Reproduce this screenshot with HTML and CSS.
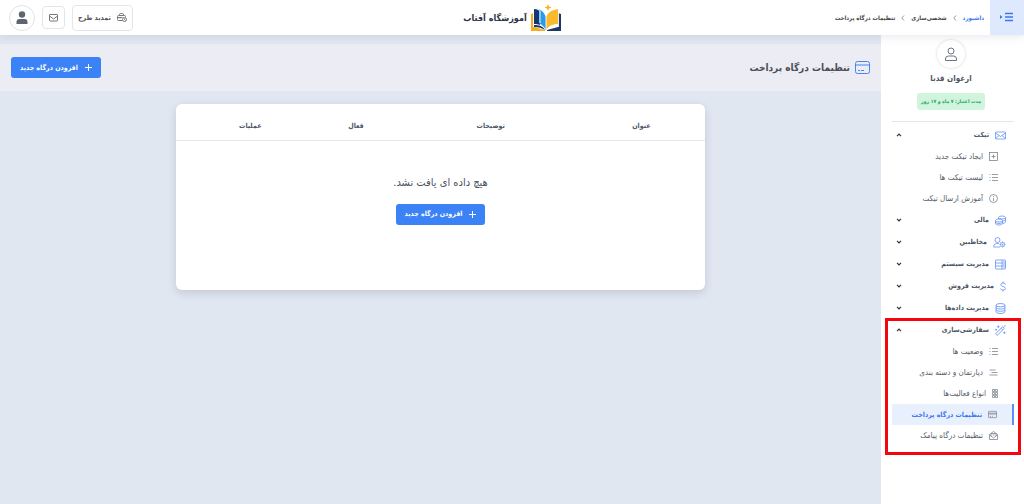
FILE: index.html
```html
<!DOCTYPE html>
<html lang="fa" dir="rtl">
<head>
    <meta charset="UTF-8">
    <meta name="viewport" content="width=device-width, initial-scale=1.0">
    <title>تنظیمات درگاه پرداخت</title>
    <link rel="stylesheet" href="styles.css">
</head>
<body>

<header class="topbar">
    <div class="topbar-start">
        <button class="menu-toggle" aria-label="منو">
            <svg width="16" height="10" viewBox="0 0 16 10" fill="none" stroke="#3b76f0" stroke-width="1.3"><path d="M6 1.500h8M6 5h8M6 8.500h8"/><path d="M1 3l2.500 2L1 7z" fill="#3b76f0" stroke="none"/></svg>
        </button>
        <nav class="breadcrumb">
            <a href="#" class="current">داشبورد</a>
            <svg class="sep" viewBox="0 0 4 6"><path d="M1 .5L3.200 3 1 5.500"/></svg>
            <a href="#">شخصی‌سازی</a>
            <svg class="sep" viewBox="0 0 4 6"><path d="M1 .5L3.200 3 1 5.500"/></svg>
            <span>تنظیمات درگاه پرداخت</span>
        </nav>
    </div>
    <div class="brand">
        <svg width="30" height="28" viewBox="0 0 30 28">
            <path d="M0 10l3-1v14l11 3v1H0z" fill="#f9ab22"/>
            <path d="M30 10l-3-1v14l-11 3v1h14z" fill="#1c3764"/>
            <path d="M3 5c3 0 5 1 6 3v13c-2-1-4-1-6-1z" fill="#15396f"/>
            <path d="M8 5c4 2 6 5 7 9v13c-1-4-4-6-7-8z" fill="#2a9be8"/>
            <path d="M3 21c5 0 9 1 11 5-3-2-6-3-11-3z" fill="#15396f"/>
            <path d="M27 5c-7 1-11 4-12 9v13c2-5 6-7 12-7z" fill="#fbb92c"/>
            <path d="M9 5v14M15 13v14M2.500 8v15M27.500 8v15M15 27c2-4 6-6 12-6" fill="none" stroke="#fff" stroke-width=".9"/>
            <path d="M17 0l1 2.500 2.500 1-2.500 1-1 2.500-1-2.500-2.500-1 2.500-1z" fill="#fbb324"/>
        </svg>
        <span>آموزشگاه آفتاب</span>
    </div>
    <div class="topbar-end">
        <button class="top-btn renew">
            <svg width="10" height="9" viewBox="0 0 20 18" class="line-icon"><path d="M5 5V3q0-2 2-2h4q2 0 2 2v2M11 15H3q-2 0-2-2V7q0-2 2-2h12q2 0 2 2v1M1 9h10M6 8v3"/><circle cx="15" cy="13" r="4"/><path d="M15 11v2l2 1"/></svg>
            تمدید طرح
        </button>
        <button class="top-btn mail" aria-label="پیام‌ها">
            <svg width="9" height="8" viewBox="0 0 18 16" class="line-icon"><rect x="1" y="1" width="16" height="13" rx="1"/><path d="M1 4l8 6 8-6"/></svg>
        </button>
        <button class="user-btn" aria-label="حساب کاربری">
            <svg width="12" height="13" viewBox="0 0 12 13" fill="#5d6472"><circle cx="6" cy="3.500" r="3.200"/><path d="M.5 13v-2q0-3 3-3h5q3 0 3 3v2z"/></svg>
        </button>
    </div>
</header>

<div class="layout">
    <aside class="sidebar">
        <div class="profile">
            <div class="profile-avatar">
                <svg width="14" height="15" viewBox="0 0 14 15" fill="none" stroke="#6b7280" stroke-width="1"><circle cx="7" cy="4" r="3"/><path d="M1.500 13.500v-1.500q0-3 3-3h5q3 0 3 3v1.500z"/></svg>
            </div>
            <div class="profile-name">ارغوان قدبا</div>
            <div class="profile-badge">مدت اعتبار: ۷ ماه و ۱۷ روز</div>
        </div>

        <nav class="menu">
            <section>
                <button class="group" aria-expanded="true">
                    <svg class="icon" viewBox="0 0 22 20"><rect x="1" y="3" width="20" height="14" rx="1"/><path d="M1 5l10 7 10-7M1 16l7-6M21 16l-7-6"/></svg>
                    <span>تیکت</span>
                    <svg class="chevron" viewBox="0 0 6 4"><path d="M1 3.200L3 1.200l2 2"/></svg>
                </button>
                <ul class="submenu">
                    <li><a href="#"><svg class="icon" viewBox="0 0 18 18"><rect x="1" y="1" width="16" height="16"/><path d="M9 5v8M5 9h8"/></svg>ایجاد تیکت جدید</a></li>
                    <li><a href="#"><svg class="icon" viewBox="0 0 18 18"><path d="M6 3h12M6 9h12M6 15h12M1 3h2M1 9h2M1 15h2"/></svg>لیست تیکت ها</a></li>
                    <li><a href="#"><svg class="icon" viewBox="0 0 18 18"><circle cx="9" cy="9" r="8"/><path d="M9 8v6M9 4v2"/></svg>آموزش ارسال تیکت</a></li>
                </ul>
            </section>
            <section>
                <button class="group">
                    <svg class="icon" viewBox="0 0 22 20"><ellipse cx="14" cy="4" rx="7" ry="3"/><path d="M7 4v3M21 4v9q-1 2-5 3M21 8q-1 2-5 3"/><ellipse cx="8" cy="10" rx="7" ry="3"/><path d="M1 10v6c0 4 14 4 14 0v-6M1 13c0 4 14 4 14 0"/></svg>
                    <span>مالی</span>
                    <svg class="chevron" viewBox="0 0 6 4"><path d="M1 .8l2 2 2-2"/></svg>
                </button>
            </section>
            <section>
                <button class="group">
                    <svg class="icon wide" viewBox="0 0 26 22"><circle cx="9" cy="6" r="5"/><path d="M14 20H1q0-7 6-7h5"/><circle cx="19" cy="15" r="4"/><circle cx="19" cy="15" r="1"/><path d="M19 9v2M19 19v2M13 15h2M23 15h2M15 11l1 1M22 18l1 1M23 11l-1 1M15 19l1-1"/></svg>
                    <span>مخاطبین</span>
                    <svg class="chevron" viewBox="0 0 6 4"><path d="M1 .8l2 2 2-2"/></svg>
                </button>
            </section>
            <section>
                <button class="group">
                    <svg class="icon" viewBox="0 0 22 20"><rect x="1" y="1" width="20" height="18" rx="1"/><path d="M1 7h20M1 13h20M14 1v18M17 4h2M17 10h2M17 16h2"/></svg>
                    <span>مدیریت سیستم</span>
                    <svg class="chevron" viewBox="0 0 6 4"><path d="M1 .8l2 2 2-2"/></svg>
                </button>
            </section>
            <section>
                <button class="group">
                    <svg class="icon narrow" viewBox="0 0 12 20"><path d="M6 0v3M6 17v3M11 6q0-3-5-3-4.500 0-4.500 3.300Q1.500 9 6 10q5 1 5 4 0 3-5 3t-5-3"/></svg>
                    <span>مدیریت فروش</span>
                    <svg class="chevron" viewBox="0 0 6 4"><path d="M1 .8l2 2 2-2"/></svg>
                </button>
            </section>
            <section>
                <button class="group">
                    <svg class="icon" viewBox="0 0 20 20"><ellipse cx="10" cy="4" rx="8" ry="3"/><path d="M2 4v12c0 4 16 4 16 0V4M2 8c0 4 16 4 16 0M2 12c0 4 16 4 16 0"/></svg>
                    <span>مدیریت داده‌ها</span>
                    <svg class="chevron" viewBox="0 0 6 4"><path d="M1 .8l2 2 2-2"/></svg>
                </button>
            </section>
            <section class="marked">
                <button class="group" aria-expanded="true">
                    <svg class="icon" viewBox="0 0 20 20"><path d="M1 16L14 3l3 3L4 19zM11 6l3 3M6 1v4M4 3h4M2 7v3M.5 8.500h3M17 12v4M15 14h4M18 0v3"/></svg>
                    <span>سفارشی‌سازی</span>
                    <svg class="chevron" viewBox="0 0 6 4"><path d="M1 3.200L3 1.200l2 2"/></svg>
                </button>
                <ul class="submenu">
                    <li><a href="#"><svg class="icon" viewBox="0 0 18 18"><path d="M6 3h12M6 9h12M6 15h12M1 3h2M1 9h2M1 15h2"/></svg>وضعیت ها</a></li>
                    <li><a href="#"><svg class="icon" viewBox="0 0 18 18"><path d="M1 4h12M5 9h12M1 14h16"/></svg>دپارتمان و دسته بندی</a></li>
                    <li><a href="#"><svg class="icon slim" viewBox="0 0 12 18"><path d="M1 1h4v4H1zM7 1h4v4H7zM1 7h4v4H1zM7 7h4v4H7zM1 13h4v4H1zM7 13h4v4H7z"/></svg>انواع فعالیت‌ها</a></li>
                    <li><a href="#" class="active"><svg class="icon" viewBox="0 0 20 16"><rect x="1" y="1" width="18" height="14" rx="1"/><path d="M1 5h18M1 7h18M4 12h3M9 12h2"/></svg>تنظیمات درگاه پرداخت</a></li>
                    <li><a href="#"><svg class="icon" viewBox="0 0 18 18"><path d="M1 7l8-6 8 6v10H1zM1 8l8 6 8-6M4 10V5h10v5M7 8h4"/></svg>تنظیمات درگاه پیامک</a></li>
                </ul>
            </section>
        </nav>
    </aside>

    <main class="content">
        <div class="page-head">
            <h1>
                <svg width="15" height="13" viewBox="0 0 15 13" fill="none" stroke="#4a82f0" stroke-width="1"><rect x=".5" y=".5" width="14" height="12" rx="2"/><path d="M.5 4h14M3 9.500h2M6 9.500h3"/></svg>
                تنظیمات درگاه پرداخت
            </h1>
            <button class="add-btn">
                <svg width="7" height="7" viewBox="0 0 7 7" stroke="#fff"><path d="M3.500 0v7M0 3.500h7"/></svg>
                افزودن درگاه جدید
            </button>
        </div>

        <div class="card">
            <table>
                <thead>
                    <tr>
                        <th class="col-title">عنوان</th>
                        <th class="col-desc">توضیحات</th>
                        <th class="col-active">فعال</th>
                        <th class="col-actions">عملیات</th>
                    </tr>
                </thead>
                <tbody>
                    <tr>
                        <td colspan="4">
                            <div class="empty">
                                <p>هیچ داده ای یافت نشد.</p>
                                <button class="add-btn">
                                    <svg width="7" height="7" viewBox="0 0 7 7" stroke="#fff"><path d="M3.500 0v7M0 3.500h7"/></svg>
                                    افزودن درگاه جدید
                                </button>
                            </div>
                        </td>
                    </tr>
                </tbody>
            </table>
        </div>
    </main>
</div>

</body>
</html>
```
FILE: styles.css
```css
* {
    box-sizing: border-box;
}
body {
    margin: 0;
    min-height: 100vh;
    display: flex;
    flex-direction: column;
    background-color: #e1e7f1;
    color: #4b5563;
    font-family: "DejaVu Sans Condensed", "DejaVu Sans", sans-serif;
    font-size: 7px;
}
button {
    font-family: inherit;
    border: none;
    cursor: pointer;
}
a {
    color: inherit;
    text-decoration: none;
}
svg {
    flex: none;
}
.topbar {
    display: grid;
    grid-template-columns: 1fr auto 1fr;
    align-items: center;
    height: 35px;
    background-color: #fff;
    box-shadow: 0 2px 8px rgba(100, 116, 139, 0.15);
    position: relative;
}
.topbar-start,
.topbar-end,
.breadcrumb,
.brand {
    display: flex;
    align-items: center;
}
.topbar-start {
    gap: 6px;
}
.menu-toggle {
    width: 34px;
    height: 35px;
    padding: 0;
    background-color: #dfe9fd;
}
.breadcrumb {
    gap: 6px;
    color: #444;
    font-size: 6px;
    font-weight: bold;
    white-space: nowrap;
}
.breadcrumb .current {
    color: #3b76f0;
}
.sep {
    width: 4px;
    height: 6px;
    fill: none;
    stroke: #999;
    transform: scaleX(-1);
}
.brand {
    gap: 4px;
    color: #2c3448;
    font-size: 9px;
    font-weight: bold;
}
.topbar-end {
    justify-content: flex-end;
    gap: 7px;
    padding-left: 9px;
}
.top-btn {
    display: flex;
    align-items: center;
    justify-content: center;
    gap: 6px;
    background-color: #fff;
    border: 1px solid #e2e6ec;
    border-radius: 4px;
    color: #555;
    font-size: 7px;
    font-weight: bold;
}
.renew {
    height: 26px;
    padding: 0 5px;
}
.mail {
    width: 23px;
    height: 23px;
    padding: 0;
}
.line-icon {
    fill: none;
    stroke: #777;
    stroke-width: 2;
}
.user-btn {
    display: flex;
    align-items: center;
    justify-content: center;
    width: 26px;
    height: 26px;
    padding: 0;
    background-color: #fff;
    border: 1px solid #dfe3ea;
    border-radius: 50%;
}
.layout {
    display: flex;
    flex: 1;
}
.sidebar {
    flex: 0 0 143px;
    padding: 5px 10px 0 11px;
    background-color: #fff;
}
.profile {
    display: flex;
    flex-direction: column;
    align-items: center;
    padding: 0 4px 11px 0;
    border-bottom: 1px solid #e3e6ea;
}
.profile-avatar {
    display: flex;
    align-items: center;
    justify-content: center;
    width: 28px;
    height: 28px;
    border-radius: 50%;
    box-shadow: 0 0 3px rgba(0, 0, 0, 0.18);
}
.profile-name {
    margin: 4px 0 7px;
    font-size: 8px;
    line-height: 14px;
    font-weight: bold;
}
.profile-badge {
    padding: 0 4px;
    background-color: #d1f4dc;
    border-radius: 3px;
    color: #20a766;
    font-size: 5px;
    line-height: 17px;
    font-weight: bold;
    white-space: nowrap;
}
.menu {
    padding-top: 2px;
}
.group {
    display: flex;
    align-items: center;
    gap: 6px;
    width: 100%;
    height: 22px;
    padding: 0 8px 0 4px;
    background: none;
    color: #4b5563;
    font-size: 7px;
    font-weight: bold;
}
.icon {
    width: 9px;
    height: 9px;
    fill: none;
    stroke: #777d88;
    stroke-width: 1.5;
}
.group .icon {
    width: 11px;
    height: 11px;
    stroke: #5b8cf0;
}
.group .icon.wide {
    width: 13px;
}
.group .icon.narrow {
    width: 6px;
}
.icon.slim {
    width: 6px;
}
.chevron {
    width: 6px;
    height: 4px;
    margin-right: auto;
    fill: none;
    stroke: #333;
    stroke-width: 1.2;
}
.submenu {
    margin: 0;
    padding: 0;
    list-style: none;
}
.submenu a {
    display: flex;
    align-items: center;
    gap: 6px;
    height: 21px;
    padding-right: 16px;
    color: #555c68;
    font-size: 8px;
    white-space: nowrap;
}
.submenu .active {
    padding-right: 15px;
    background-color: #e8f0fe;
    border-right: 2px solid #5b8ff5;
    color: #3b76f0;
    font-size: 7px;
    font-weight: bold;
}
.marked {
    position: relative;
}
.marked::after {
    content: "";
    position: absolute;
    top: -1px;
    right: -7px;
    bottom: -9px;
    left: -7px;
    border: 3px solid #f5060c;
    pointer-events: none;
}
.content {
    flex: 1;
    min-width: 0;
    padding-top: 9px;
}
.page-head {
    display: flex;
    align-items: center;
    justify-content: space-between;
    height: 47px;
    padding: 0 11px;
    background-color: #ececf4;
}
.page-head h1 {
    display: flex;
    align-items: center;
    gap: 5px;
    margin: 0;
    color: #4d4f57;
    font-size: 10px;
}
.add-btn {
    display: flex;
    align-items: center;
    gap: 7px;
    height: 21px;
    padding: 0 9px;
    background-color: #3b82f6;
    border-radius: 3px;
    color: #fff;
    font-size: 7px;
    font-weight: bold;
    white-space: nowrap;
}
.card {
    width: 60%;
    min-height: 186px;
    margin: 13px auto 0;
    background-color: #fff;
    border-radius: 6px;
    box-shadow: 0 3px 8px rgba(71, 85, 105, 0.2);
}
table {
    width: 100%;
    border-collapse: collapse;
    table-layout: fixed;
}
th {
    height: 36px;
    padding: 8px 0 0;
    border-bottom: 1px solid #e3e6ea;
    color: #4b5563;
    font-size: 7px;
}
.col-title {
    width: 24%;
}
.col-desc {
    width: 33%;
}
.col-active {
    width: 18%;
}
.col-actions {
    padding-left: 16px;
}
td {
    padding: 0;
}
.empty {
    display: flex;
    flex-direction: column;
    align-items: center;
    padding-top: 34px;
}
.empty p {
    margin: 0 0 13px;
    font-size: 11px;
    line-height: 16px;
}
```
